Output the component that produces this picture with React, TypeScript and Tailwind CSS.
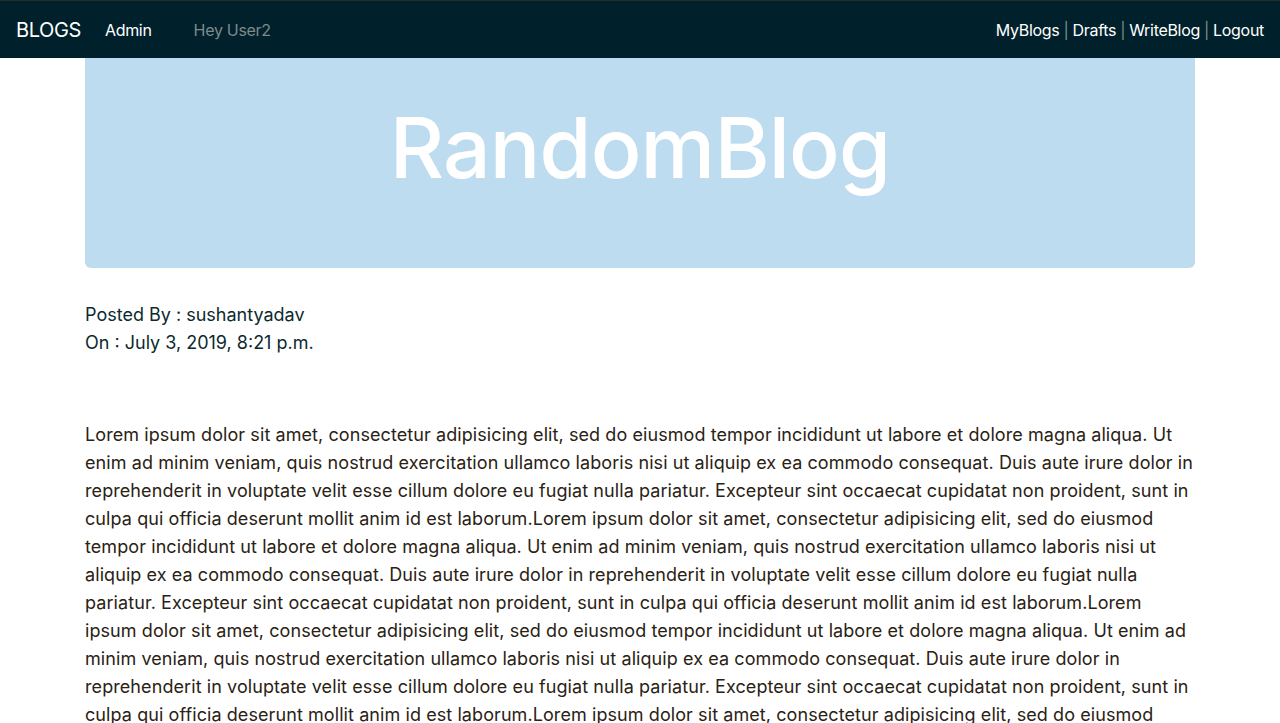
const lorem =
  "Lorem ipsum dolor sit amet, consectetur adipisicing elit, sed do eiusmod tempor incididunt ut labore et dolore magna aliqua. Ut enim ad minim veniam, quis nostrud exercitation ullamco laboris nisi ut aliquip ex ea commodo consequat. Duis aute irure dolor in reprehenderit in voluptate velit esse cillum dolore eu fugiat nulla pariatur. Excepteur sint occaecat cupidatat non proident, sunt in culpa qui officia deserunt mollit anim id est laborum.";

export default function App() {
  return (
    <div className="min-h-screen bg-white font-['Inter',sans-serif]">
      {/* navbar */}
      <nav className="flex h-[58px] items-center justify-between border-t border-[#2b2b2b] bg-[#00212b] px-4">
        <div className="flex items-center">
          <a href="#" className="text-[20px] tracking-[-0.4px] text-white">
            BLOGS
          </a>
          <a href="#" className="ml-6 text-[16px] tracking-[-0.3px] text-white">
            Admin
          </a>
          <span className="ml-[42px] text-[16px] tracking-[-0.3px] text-[#7f8a8c]">Hey User2</span>
        </div>
        <div className="flex items-center text-[16px] tracking-[-0.3px] text-white">
          <a href="#">MyBlogs</a>
          <span className="mx-[4px] text-[#7f8a8c]">|</span>
          <a href="#">Drafts</a>
          <span className="mx-[4px] text-[#7f8a8c]">|</span>
          <a href="#">WriteBlog</a>
          <span className="mx-[4px] text-[#7f8a8c]">|</span>
          <a href="#">Logout</a>
        </div>
      </nav>

      <div className="mx-auto w-[1110px]">
        {/* jumbotron */}
        <div className="flex h-[210px] items-center justify-center rounded-b-md bg-[#bddcf0] pb-[30px]">
          <h1 className="text-[84px] font-medium leading-none tracking-[-0.8px] text-white">RandomBlog</h1>
        </div>

        <div className="mt-[33px] text-[18px] leading-[28px] text-[#0c2a2e]">
          <p>Posted By : sushantyadav</p>
          <p>On : July 3, 2019, 8:21 p.m.</p>
        </div>

        <p className="mt-[64px] text-[18px] leading-[28px] tracking-[0.08px] text-[#2a2214]">
          {lorem}
          {lorem}
          {lorem}
          {lorem}
        </p>
      </div>
    </div>
  );
}
